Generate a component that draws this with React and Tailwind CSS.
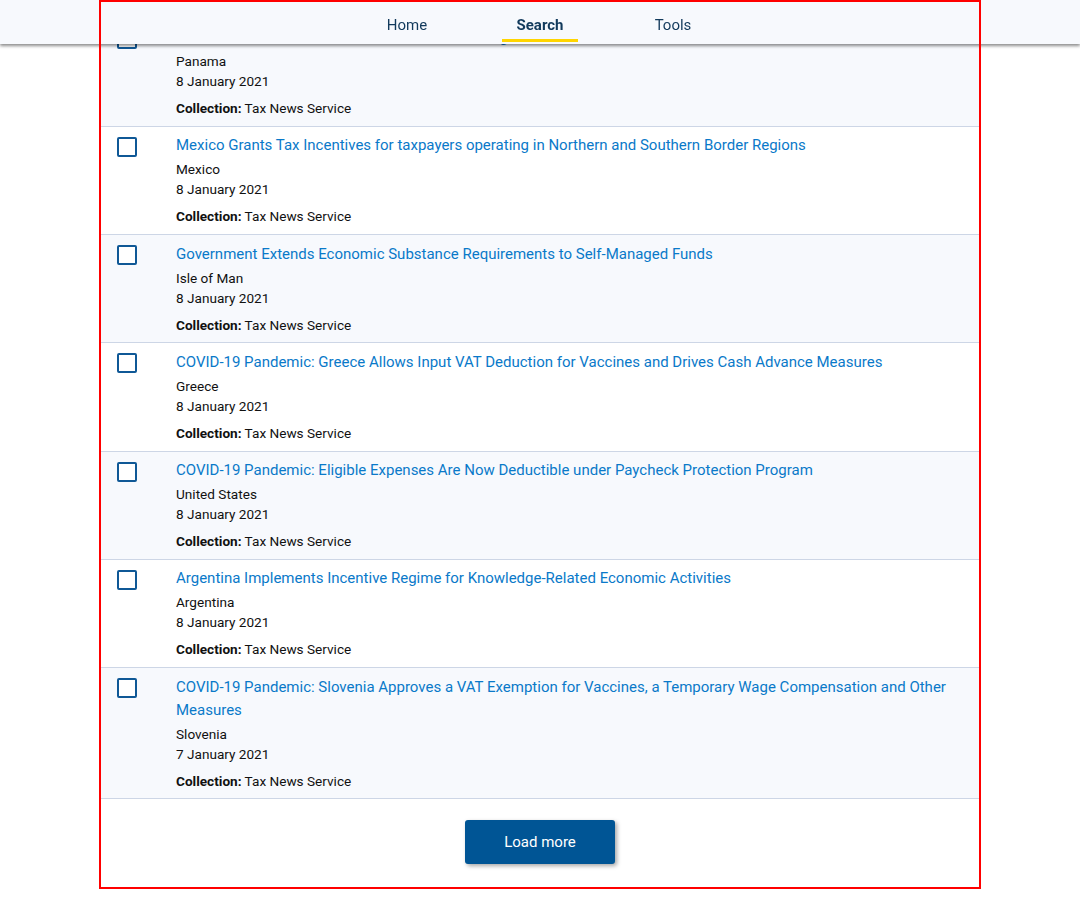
import React from "react";

const items = [
  {
    title: "Panama Issues Guidance on Tax Treatment of Digital Services Provided from Abroad",
    country: "Panama",
    date: "8 January 2021",
  },
  {
    title: "Mexico Grants Tax Incentives for taxpayers operating in Northern and Southern Border Regions",
    country: "Mexico",
    date: "8 January 2021",
  },
  {
    title: "Government Extends Economic Substance Requirements to Self-Managed Funds",
    country: "Isle of Man",
    date: "8 January 2021",
  },
  {
    title: "COVID-19 Pandemic: Greece Allows Input VAT Deduction for Vaccines and Drives Cash Advance Measures",
    country: "Greece",
    date: "8 January 2021",
  },
  {
    title: "COVID-19 Pandemic: Eligible Expenses Are Now Deductible under Paycheck Protection Program",
    country: "United States",
    date: "8 January 2021",
  },
  {
    title: "Argentina Implements Incentive Regime for Knowledge-Related Economic Activities",
    country: "Argentina",
    date: "8 January 2021",
  },
  {
    title: "COVID-19 Pandemic: Slovenia Approves a VAT Exemption for Vaccines, a Temporary Wage Compensation and Other Measures",
    country: "Slovenia",
    date: "7 January 2021",
  },
];

function Row({ item, light }) {
  return (
    <div
      className={
        "flex border-b border-[#cdd6e6] pt-[7.5px] pb-[7.75px] " +
        (light ? "bg-[#f7f9fd]" : "bg-white")
      }
    >
      <div className="w-[76px] shrink-0 pl-[17px] pt-[2.5px]">
        <div className="w-[20px] h-[20px] border-2 border-[#0f5896] rounded-[2px] bg-white" />
      </div>
      <div className="flex-1 pr-[24px]">
        <a className="block text-[15px] leading-[23px] text-[#0a79c9] cursor-pointer">
          {item.title}
        </a>
        <div className="mt-[2px] text-[13.6px] leading-[20px] text-[#111]">{item.country}</div>
        <div className="text-[13.6px] leading-[20px] text-[#111]">{item.date}</div>
        <div className="mt-[7px] text-[13.6px] leading-[20px] text-[#111]">
          <span className="font-bold">Collection:</span> Tax News Service
        </div>
      </div>
    </div>
  );
}

export default function App() {
  return (
    <div
      className="relative min-h-[913px] bg-white"
      style={{ fontFamily: "Roboto, 'Liberation Sans', sans-serif" }}
    >
      <header className="fixed top-0 left-0 right-0 z-10 h-[44px] bg-[#f7f9fd] shadow-[0_2px_3px_rgba(0,0,0,0.45)]">
        <nav className="flex justify-center h-full">
          <div className="w-[133px] flex justify-center">
            <span className="block h-[42px] pt-[15px] px-[15px] text-[15px] leading-[20px] text-[#123a5c] border-b-[3px] border-transparent">
              Home
            </span>
          </div>
          <div className="w-[133px] flex justify-center">
            <span className="block h-[42px] pt-[15px] px-[15px] text-[15px] leading-[20px] font-bold text-[#123a5c] border-b-[3px] border-[#ffd500]">
              Search
            </span>
          </div>
          <div className="w-[133px] flex justify-center">
            <span className="block h-[42px] pt-[15px] px-[15px] text-[15px] leading-[20px] text-[#123a5c] border-b-[3px] border-transparent">
              Tools
            </span>
          </div>
        </nav>
      </header>

      <main className="w-[880px] mx-auto pt-[18.5px] pb-[26px]">
        <div>
          {items.map((it, i) => (
            <Row key={i} item={it} light={i % 2 === 0} />
          ))}
        </div>
        <div className="flex justify-center pt-[21px]">
          <button className="w-[150px] h-[44px] rounded-[3px] bg-[#005595] text-white text-[15px] font-normal shadow-[2px_2px_4px_rgba(0,0,0,0.35)]">
            Load more
          </button>
        </div>
      </main>

      <div className="pointer-events-none absolute left-[99px] top-0 w-[882px] h-[889px] border-2 border-[#ff0000] z-20" />
    </div>
  );
}
